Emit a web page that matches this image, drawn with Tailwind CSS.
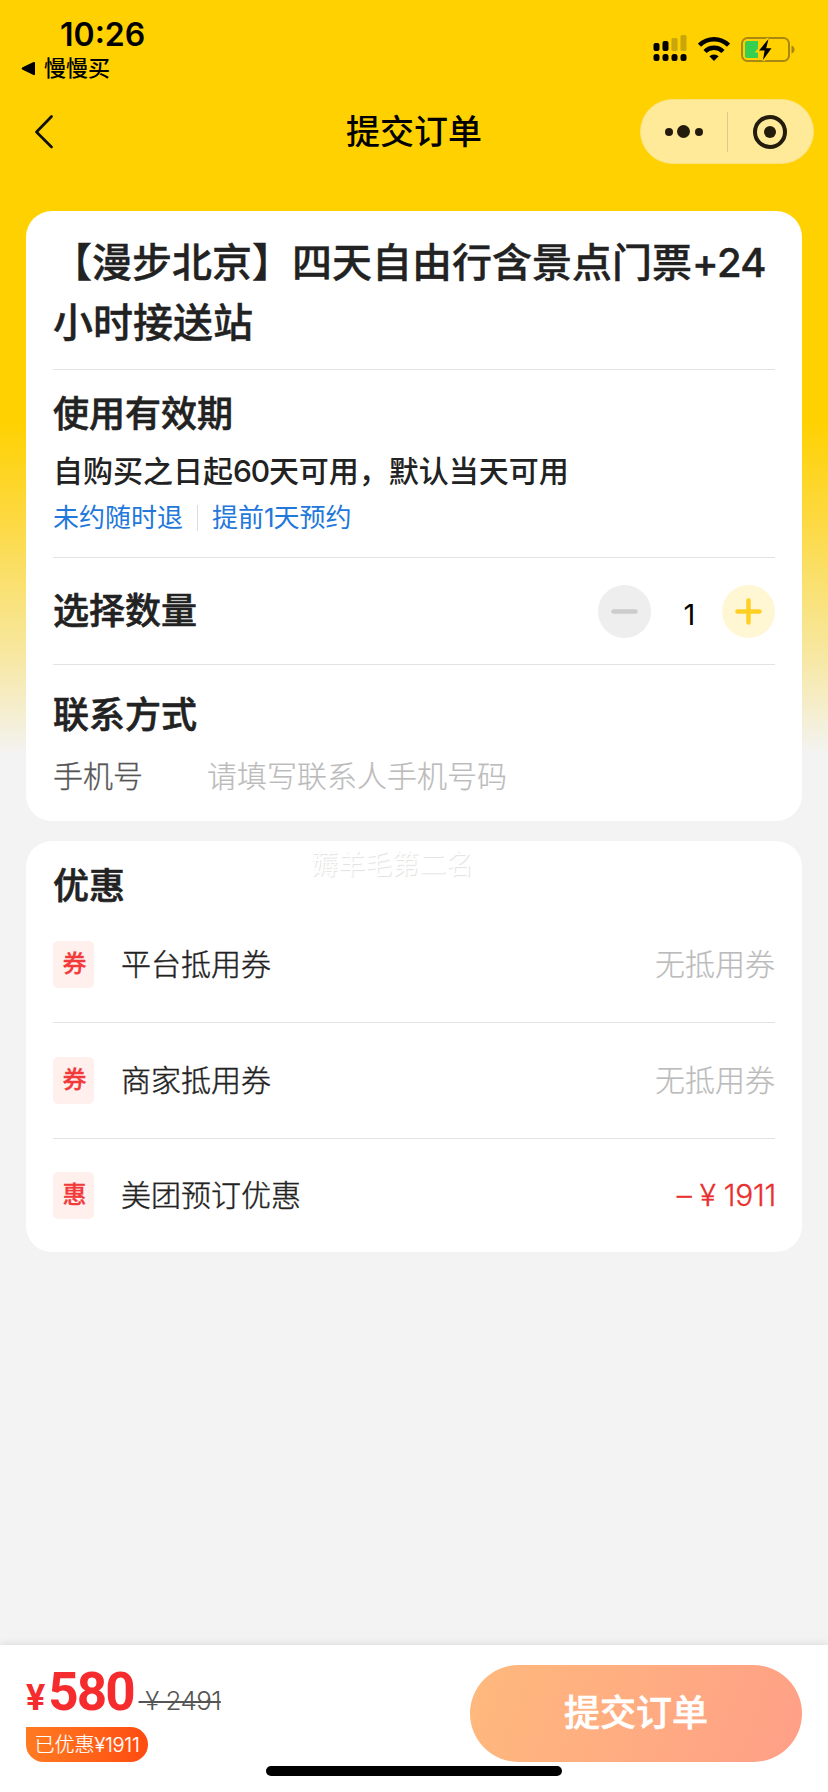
<!DOCTYPE html>
<html lang="zh-CN">
<head>
<meta charset="utf-8">
<meta name="viewport" content="width=828">
<title>提交订单</title>
<script src="https://cdn.jsdelivr.net/npm/@tailwindcss/browser@4"></script>
</head>
<body class="bg-[#f3f3f3]">
<div class="relative flex h-[1792px] w-[828px] flex-col overflow-hidden bg-[linear-gradient(to_bottom,#ffd100_420px,#fdd941_520px,#fadf66_570px,#f7e8a5_660px,#f3f3f3_755px)] font-['Inter','Noto_Sans_CJK_SC',sans-serif] text-[#222]">

  <!-- Status bar -->
  <header class="flex h-[90px] shrink-0 justify-between pr-[33px] text-black">
    <div class="pt-[16px]">
      <div class="pl-[60px] text-[32px] leading-[38px] font-semibold">10:26</div>
      <div class="flex h-[29px] items-center pl-[21px]">
        <svg class="h-[15px] w-[15px]" viewBox="0 0 15 15"><path d="M1.2 6.6 12.5 1q1.500-.5 1.500 1v11q0 1.500-1.500 1L1.200 8.400Q0 7.500 1.200 6.600Z"/></svg>
        <span class="pl-[8px] text-[22px] leading-[29px] font-medium">慢慢买</span>
      </div>
    </div>
    <div class="flex items-start gap-[11px] pt-[34px]">
      <svg class="h-[28px] w-[34px]" viewBox="0 0 34 28">
        <g fill="#c8a60c"><rect x="18.500" y="4" width="6" height="13" rx="1.500"/><rect x="27.500" y="1" width="6" height="16" rx="1.500"/></g>
        <rect x=".5" y="9" width="6" height="8" rx="2"/><rect x="9.500" y="7" width="6" height="10" rx="2"/>
        <rect x=".5" y="20" width="6" height="7" rx="2.500"/><rect x="9.500" y="20" width="6" height="7" rx="2.500"/><rect x="18.500" y="20" width="6" height="7" rx="2.500"/><rect x="27.500" y="20" width="6" height="7" rx="2.500"/>
      </svg>
      <svg class="h-[28px] w-[32px]" viewBox="0 0 32 28" fill="none" stroke="#000" stroke-width="4.400">
        <path d="M1.500 11.200a20.500 20.500 0 0 1 29 0"/><path d="M7 17.500a12.700 12.700 0 0 1 18 0"/><path d="M16 27l-4.600-4.700a6.500 6.500 0 0 1 9.200 0z" fill="#000" stroke="none"/>
      </svg>
      <svg class="h-[28px] w-[54px]" viewBox="0 0 54 28">
        <rect x="1" y="4" width="47" height="23" rx="5.500" fill="none" stroke="#a98714" stroke-width="2"/>
        <path d="M50.500 11.500q3 1 3 4t-3 4z" fill="#a98714"/>
        <path d="M6 7h11v17H6q-2 0-2-2V9q0-2 2-2Z" fill="#35cf52"/>
        <path d="M27.500 5 18 16.400h5.600L22 26 30.500 14.300h-5.300z" fill="#000" stroke="#ffd100" stroke-width="4" paint-order="stroke"/>
      </svg>
    </div>
  </header>

  <!-- Navigation bar -->
  <nav class="grid h-[121px] shrink-0 grid-cols-[1fr_auto_1fr] items-start pt-[9px] text-black">
    <div class="flex h-[65px] items-center pl-[34px]">
      <svg class="h-[34px] w-[20px]" viewBox="0 0 20 34" fill="none" stroke="#111" stroke-width="2.700" stroke-linecap="round" stroke-linejoin="round"><path d="M17.500 1.500 2.500 17l15 15"/></svg>
    </div>
    <h1 class="text-[34px] leading-[65px] font-medium">提交订单</h1>
    <div class="mr-[14px] flex h-[65px] w-[174px] items-center justify-self-end rounded-full border border-[#fbe27c] bg-[#feea99]">
      <div class="flex flex-1 items-center justify-center gap-[4.500px]">
        <i class="h-[8px] w-[8px] rounded-full bg-[#231c0c]"></i><i class="h-[13px] w-[13px] rounded-full bg-[#231c0c]"></i><i class="h-[8px] w-[8px] rounded-full bg-[#231c0c]"></i>
      </div>
      <div class="h-[40px] w-px bg-[#dccb88]"></div>
      <div class="flex flex-1 justify-center">
        <div class="flex h-[34px] w-[34px] items-center justify-center rounded-full border-4 border-[#231c0c]"><i class="h-[12px] w-[12px] rounded-full bg-[#231c0c]"></i></div>
      </div>
    </div>
  </nav>

  <main class="flex flex-1 flex-col gap-[20px] px-[26px]">
    <section class="flex h-[610px] flex-col rounded-[26px] bg-white px-[27px]">
      <h2 class="h-[158px] pt-[22px] text-[40px] leading-[60px] font-medium whitespace-nowrap [-webkit-text-stroke:0.4px_#222]"><span class="-ml-px">【漫步北京】四天自由行含景点门票</span><span class="tracking-[-0.6px]">+24</span><br>小时接送站</h2>
      <div class="h-[188px] border-t border-[#e3e3e3] pt-[18px]">
        <h3 class="text-[36px] leading-[52px] font-medium [-webkit-text-stroke:0.6px_#222]">使用有效期</h3>
        <p class="pt-[9px] text-[30px] leading-[44px] font-medium">自购买之日起<span class="tracking-[-1.200px]">60</span>天可用，默认当天可用</p>
        <div class="mt-[2px] flex h-[46px] items-center text-[26px] leading-[40px] text-[#2278da]">
          <span>未约随时退</span><i class="mx-[14px] h-[26px] w-px bg-[#ddd]"></i><span>提前<span class="tracking-[-1px]">1</span>天预约</span>
        </div>
      </div>
      <div class="flex h-[107px] items-center justify-between border-t border-[#e3e3e3]">
        <h3 class="text-[36px] leading-[52px] font-medium [-webkit-text-stroke:0.6px_#222]">选择数量</h3>
        <div class="flex items-center">
          <svg class="h-[53px] w-[53px]" viewBox="0 0 53 53"><circle cx="26.500" cy="26.500" r="26.500" fill="#eee"/><path d="M15.500 26.500h22" stroke="#ccc" stroke-width="4.500" stroke-linecap="round"/></svg>
          <span class="w-[71px] pt-[8px] pl-[6px] text-center text-[29px] leading-[44px] text-black">1</span>
          <svg class="h-[53px] w-[53px]" viewBox="0 0 53 53"><circle cx="26.500" cy="26.500" r="26.500" fill="#fff7d4"/><path d="M15.500 26.500h22M26.500 15.500v22" stroke="#ffcf24" stroke-width="4.500" stroke-linecap="round"/></svg>
        </div>
      </div>
      <div class="flex-1 border-t border-[#e3e3e3] pt-[24px]">
        <h3 class="text-[36px] leading-[52px] font-medium [-webkit-text-stroke:0.6px_#222]">联系方式</h3>
        <div class="flex pt-[13px] text-[30px] leading-[44px] font-light">
          <span class="w-[154px] text-[#555] [-webkit-text-stroke:0.3px_#555]">手机号</span><span class="text-[#bbb] [-webkit-text-stroke:0.2px_#bbb]">请填写联系人手机号码</span>
        </div>
      </div>
    </section>

    <section class="relative h-[411px] rounded-[26px] bg-white px-[27px]">
      <span class="absolute top-[5px] left-[285px] text-[27px] leading-[38px] text-white [text-shadow:1px_1px_1px_#e2e2e2]">薅羊毛第二名</span>
      <h3 class="h-[66px] pt-[19px] text-[36px] leading-[52px] font-medium [-webkit-text-stroke:0.6px_#222]">优惠</h3>
      <div class="flex h-[116px] items-center border-b border-[#e3e3e3] text-[30px] font-light">
        <span class="flex h-[47px] w-[41px] items-center justify-center rounded-[5px] bg-[#fff0ed] pb-[2px] pl-[2px] text-[24px] font-medium text-[#f23a3a] [-webkit-text-stroke:0.3px_#f23a3a]">券</span>
        <span class="flex-1 pl-[27px] [-webkit-text-stroke:0.4px_#222]">平台抵用券</span><span class="text-[#bbb] [-webkit-text-stroke:0.2px_#bbb]">无抵用券</span>
      </div>
      <div class="flex h-[116px] items-center border-b border-[#e3e3e3] text-[30px] font-light">
        <span class="flex h-[47px] w-[41px] items-center justify-center rounded-[5px] bg-[#fff0ed] pb-[2px] pl-[2px] text-[24px] font-medium text-[#f23a3a] [-webkit-text-stroke:0.3px_#f23a3a]">券</span>
        <span class="flex-1 pl-[27px] [-webkit-text-stroke:0.4px_#222]">商家抵用券</span><span class="text-[#bbb] [-webkit-text-stroke:0.2px_#bbb]">无抵用券</span>
      </div>
      <div class="flex h-[113px] items-center text-[30px] font-light">
        <span class="flex h-[47px] w-[41px] items-center justify-center rounded-[5px] bg-[#fff0ed] pb-[2px] pl-[2px] text-[24px] font-medium text-[#f23a3a] [-webkit-text-stroke:0.3px_#f23a3a]">惠</span>
        <span class="flex-1 pl-[27px] [-webkit-text-stroke:0.4px_#222]">美团预订优惠</span><span class="-mr-px tracking-[-0.3px] text-[#e8302f] [-webkit-text-stroke:0.3px_#e8302f]">– ¥ 1911</span>
      </div>
    </section>
  </main>

  <!-- Checkout bar -->
  <footer class="relative flex h-[147px] shrink-0 justify-between bg-white pt-[20px] pr-[26px] pl-[26px] shadow-[0_-1px_8px_rgba(0,0,0,0.1)]">
    <div>
      <div class="flex h-[62px] items-baseline text-[#f52b2d]">
        <span class="font-['Roboto'] text-[36px] leading-[54px] font-bold">¥</span>
        <span class="pl-[3px] font-['Roboto'] text-[53px] leading-[54px] font-bold tracking-[-2px]">580</span>
        <span class="ml-[5px] text-[26px] leading-[54px] font-light tracking-[-0.6px] text-[#555] line-through decoration-2">&nbsp;¥ 2491</span>
      </div>
      <div class="flex h-[35px] w-[122px] items-center justify-center rounded-full rounded-tl-none bg-linear-to-r from-[#ff7a21] to-[#ff4a10] text-[20px] font-light whitespace-nowrap text-white [-webkit-text-stroke:0.2px_#fff]">已优惠<span class="tracking-[-0.3px]">¥1911</span></div>
    </div>
    <button class="h-[97px] w-[332px] rounded-full bg-[linear-gradient(110deg,#ffb97c,#ff9f87)] text-[36px] leading-[97px] font-medium text-white [-webkit-text-stroke:0.6px_#fff]">提交订单</button>
    <div class="absolute top-[121px] left-[266px] h-[10px] w-[296px] rounded-full bg-black"></div>
  </footer>
</div>
</body>
</html>
